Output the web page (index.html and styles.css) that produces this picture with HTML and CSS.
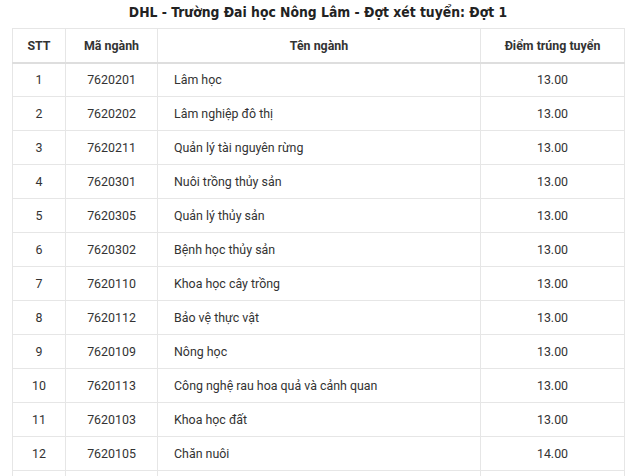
FILE: index.html
```html
<!DOCTYPE html>
<html lang="vi">
<head>
<meta charset="utf-8">
<link rel="stylesheet" href="styles.css">
</head>
<body>
<div class="wrap">
  <h2 class="title">DHL - Trường Đai học Nông Lâm - Đợt xét tuyển: Đợt 1</h2>
  <table class="scores">
    <colgroup>
      <col class="c1"><col class="c2"><col class="c3"><col class="c4">
    </colgroup>
    <thead>
      <tr><th>STT</th><th>Mã ngành</th><th>Tên ngành</th><th>Điểm trúng tuyển</th></tr>
    </thead>
    <tbody>
      <tr><td>1</td><td>7620201</td><td class="name">Lâm học</td><td>13.00</td></tr>
      <tr><td>2</td><td>7620202</td><td class="name">Lâm nghiệp đô thị</td><td>13.00</td></tr>
      <tr><td>3</td><td>7620211</td><td class="name">Quản lý tài nguyên rừng</td><td>13.00</td></tr>
      <tr><td>4</td><td>7620301</td><td class="name">Nuôi trồng thủy sản</td><td>13.00</td></tr>
      <tr><td>5</td><td>7620305</td><td class="name">Quản lý thủy sản</td><td>13.00</td></tr>
      <tr><td>6</td><td>7620302</td><td class="name">Bệnh học thủy sản</td><td>13.00</td></tr>
      <tr><td>7</td><td>7620110</td><td class="name">Khoa học cây trồng</td><td>13.00</td></tr>
      <tr><td>8</td><td>7620112</td><td class="name">Bảo vệ thực vật</td><td>13.00</td></tr>
      <tr><td>9</td><td>7620109</td><td class="name">Nông học</td><td>13.00</td></tr>
      <tr><td>10</td><td>7620113</td><td class="name">Công nghệ rau hoa quả và cảnh quan</td><td>13.00</td></tr>
      <tr><td>11</td><td>7620103</td><td class="name">Khoa học đất</td><td>13.00</td></tr>
      <tr><td>12</td><td>7620105</td><td class="name">Chăn nuôi</td><td>14.00</td></tr>
      <tr class="last"><td></td><td></td><td></td><td></td></tr>
    </tbody>
  </table>
</div>
</body>
</html>
```
FILE: styles.css
```css
html, body {
  margin: 0;
  padding: 0;
  background: #ffffff;
}
body {
  font-family: Roboto, "Noto Sans", sans-serif;
  color: #333333;
}
.wrap {
  width: 612px;
  margin-left: 12px;
}
.title {
  margin: 0;
  height: 28px;
  line-height: 24px;
  text-align: center;
  font-family: "DejaVu Sans Condensed", "DejaVu Sans", Verdana, sans-serif;
  font-weight: bold;
  font-size: 13.8px;
  color: #222222;
}
.scores {
  width: 612px;
  border-collapse: collapse;
  table-layout: fixed;
  font-size: 12.4px;
}
.c1 { width: 53px; }
.c2 { width: 92px; }
.c3 { width: 323px; }
.c4 { width: 144px; }
.scores th, .scores td {
  border: 1px solid #e6e6e6;
  height: 34px;
  padding: 0 8px;
  text-align: center;
  vertical-align: middle;
  box-sizing: border-box;
}
.scores th {
  font-weight: bold;
  color: #333333;
  border-bottom: 2px solid #dedede;
}
.scores td.name {
  text-align: left;
  padding-left: 16px;
}
.scores tr.last td {
  height: 20px;
}
```
